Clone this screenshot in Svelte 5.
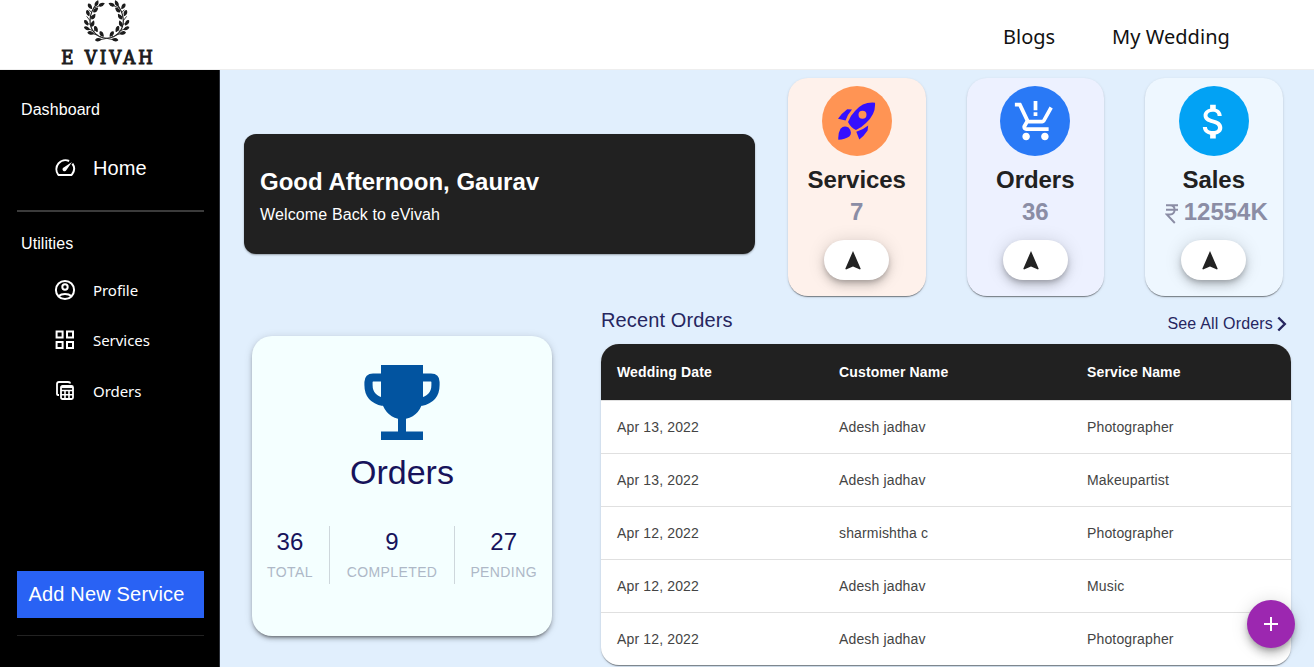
<script>
  const leaves = [
    [171, 9, -65], [186, 13, -25], [151, 18, 55], [168, 29, -45], [145, 38, 70],
    [161, 49, -55], [140, 67, 55], [159, 70, -70], [142, 84, 25], [169, 86, 65],
    [153, 98, 8], [186, 101, 55], [176, 118, -8]
  ];
  const stats = [
    { title: 'Services', value: '7', tone: 'peach', icon: 'rocket' },
    { title: 'Orders', value: '36', tone: 'lilac', icon: 'cart' },
    { title: 'Sales', value: '12554K', tone: 'sky', icon: 'dollar', rupee: true }
  ];
  const totals = [['36', 'TOTAL'], ['9', 'COMPLETED'], ['27', 'PENDING']];
  const orders = [
    ['Apr 13, 2022', 'Adesh jadhav', 'Photographer'],
    ['Apr 13, 2022', 'Adesh jadhav', 'Makeupartist'],
    ['Apr 12, 2022', 'sharmishtha c', 'Photographer'],
    ['Apr 12, 2022', 'Adesh jadhav', 'Music'],
    ['Apr 12, 2022', 'Adesh jadhav', 'Photographer']
  ];
</script>

{#snippet branch()}
  <path d="M201 114C169 112 151 88 151 61C151 39 161 22 174 7" fill="none" stroke="#222" stroke-width="3.5" />
  <path d="M151 61L141 48M152 72L139 68M152 50L164 45M156 37L148 28M164 23L182 15M159 91L143 84M163 94L168 78M173 104L154 99M182 110L189 98M201 114L178 119" fill="none" stroke="#222" stroke-width="2.5" />
  {#each leaves as [x, y, a]}
    <path d="M-8 0Q-3-7 8 0Q-2 7-8 0Z" fill="#1c1c1c" stroke="#1c1c1c" stroke-width="3.6" stroke-linejoin="round" transform="translate({x} {y}) rotate({a})" />
  {/each}
{/snippet}

<div class="page">
  <header>
    <div class="logo">
      <svg width="48" height="43" viewBox="130 -1 144 129">
        {@render branch()}
        <g transform="translate(402 0) scale(-1 1)">{@render branch()}</g>
      </svg>
      <div class="brand">E VIVAH</div>
    </div>
    <nav class="top-nav"><span class="blogs">Blogs</span><span class="wedding">My Wedding</span></nav>
  </header>

  <div class="body">
    <aside>
      <div class="label">Dashboard</div>
      <div class="item home">
        <svg width="24" height="24" viewBox="0 0 24 24" fill="none" stroke="#fff" stroke-width="2">
          <path d="M16.1 5A9 9 0 0 0 5 18.3Q5.6 19.1 6.6 19.1H17.4Q18.4 19.1 19 18.3A9 9 0 0 0 19.4 7.6" />
          <path d="M19 6L13.4 14A2 2 0 1 1 10.7 11.5Z" fill="#fff" stroke="none" />
        </svg>
        <span>Home</span>
      </div>
      <div class="rule"></div>
      <div class="label util">Utilities</div>
      <div class="menu">
        <div class="item">
          <svg width="24" height="24" viewBox="0 0 24 24" fill="none" stroke="#fff" stroke-width="2">
            <circle cx="12" cy="12" r="9.1" /><circle cx="12" cy="9" r="2.7" /><path d="M5.7 18Q8 15.9 12 15.9T18.3 18" />
          </svg><span>Profile</span>
        </div>
        <div class="item">
          <svg width="24" height="24" viewBox="0 0 24 24" fill="none" stroke="#fff" stroke-width="2">
            <path d="M3.6 3.6h6v6h-6zM14 3.6h6v6h-6zM3.6 14h6v6h-6zM14 14h6v6h-6z" />
          </svg><span>Services</span>
        </div>
        <div class="item">
          <svg width="24" height="24" viewBox="0 0 24 24" fill="none" stroke="#fff" stroke-width="1.8">
            <path d="M6 16H5Q4 16 4 15V5Q4 3 6 3H15Q17 3 17 4.5" /><rect x="8" y="7" width="12" height="13" rx="1.5" />
            <path d="M8 11.5H20M8 15.7H20M12 11.5V20M16 11.5V20" stroke-width="1.6" /><path d="M8 8.5H20" stroke-width="1.2" />
          </svg><span>Orders</span>
        </div>
      </div>
      <button class="add">Add New Service</button>
      <div class="rule faint"></div>
    </aside>

    <main>
      <section class="upper">
        <div class="banner"><h1>Good Afternoon, Gaurav</h1><p>Welcome Back to eVivah</p></div>
        <div class="stats">
          {#each stats as stat}
            <article class={stat.tone}>
              <div class="disc">
                {#if stat.icon === 'rocket'}
                  <svg width="38" height="38" viewBox="0 0 38 38" fill="#3410ff">
                    <path fill-rule="evenodd" d="M37 .7Q25-.5 17 9Q12 14 10 20Q13 26 18 28Q23 26 28 21Q38 12 37 .7ZM24.5 8.8A4 4 0 1 0 24.5 16.8A4 4 0 1 0 24.5 8.8Z" />
                    <path d="M14 7.6L9.2 7.2Q4 11 0 16.7L7.6 18.6Q9.6 12.5 14 7.6ZM18.3 29.8L21.3 37.5Q26 34 29.6 28.5L30.2 23.6Q25 28 18.3 29.8ZM2.5 26.7Q6 23 10.5 25.6Q15 30.5 11.3 34.5Q7 37.5 .3 37.7Q-.1 31 2.5 26.7Z" />
                  </svg>
                {:else if stat.icon === 'cart'}
                  <svg width="45" height="45" viewBox="0 0 24 24" fill="#fff">
                    <path d="M11 9h2V7h-2v2zm0-3h2V1h-2v5zm-4 12c-1.1 0-2 .9-2 2s.9 2 2 2 2-.9 2-2-.9-2-2-2zm10 0c-1.1 0-2 .9-2 2s.9 2 2 2 2-.9 2-2-.9-2-2-2zm-8.9-5h7.5c.7 0 1.4-.4 1.7-1l3.9-7-1.7-1-3.9 7h-7L4.3 2H1v2h2l3.6 7.6L5.2 14c-.7 1.3.3 3 1.8 3h12v-2H7l1.1-2z" />
                  </svg>
                {:else}
                  <svg width="45" height="45" viewBox="0 0 24 24" fill="#fff">
                    <path d="M11.8 10.9c-2.3-.6-3-1.2-3-2.2 0-1.1 1-1.9 2.8-1.9 1.9 0 2.6.9 2.6 2.2h2.2c-.1-1.7-1.1-3.3-3.2-3.8V3h-3v2.2c-1.9.4-3.5 1.7-3.5 3.6 0 2.3 1.9 3.5 4.7 4.1 2.5.6 3 1.5 3 2.4 0 .7-.5 1.8-2.8 1.8-2.1 0-3-.9-3.1-2.2H6.3c.1 2.4 1.9 3.7 3.9 4.1V21h3v-2.1c1.9-.4 3.5-1.5 3.5-3.6 0-2.8-2.4-3.8-4.9-4.4z" />
                  </svg>
                {/if}
              </div>
              <h2>{stat.title}</h2>
              <div class="value" class:money={stat.rupee}>
                {#if stat.rupee}
                  <svg width="14" height="20" viewBox="0 0 14 20" fill="none" stroke="#8b8da5" stroke-width="1.9"><path d="M1 1.3H13M1 5.8H13M3 1.3H5Q9.6 1.3 9.6 5.8T5 10.5H1.8L9.8 19" /></svg>
                {/if}
                <span>{stat.value}</span>
              </div>
              <button class="pill" aria-label={stat.title}>
                <svg width="16" height="19" viewBox="0 0 16 19"><path d="M8 0L15.7 17.8L15 18.5L8 15.4L1 18.5L.3 17.8Z" fill="#222" /></svg>
              </button>
            </article>
          {/each}
        </div>
      </section>

      <section class="lower">
        <article class="summary">
          <svg class="trophy" width="76" height="76" viewBox="0 0 76 76">
            <path d="M18 12.5H9Q4.5 12.5 4.5 17V20Q4.5 34 19.5 37M57 12.5H67Q71.5 12.5 71.5 17V20Q71.5 34 56.5 37" fill="none" stroke="#0254a0" stroke-width="8.2" />
            <path d="M17 0H59V34Q57 50 42 53.8V66.5H59V75H17V66.5H34V53.8Q20 50 17 34Z" fill="#0254a0" />
          </svg>
          <h3>Orders</h3>
          <div class="totals">
            {#each totals as [count, name]}<div><b>{count}</b><span>{name}</span></div>{/each}
          </div>
        </article>

        <div class="recent">
          <div class="caption">
            <h4>Recent Orders</h4>
            <div class="all"><span>See All Orders</span><svg width="10" height="16" viewBox="0 0 10 16" fill="none" stroke="#26265f" stroke-width="2.4"><path d="M1.3 1.5L7.8 8L1.3 14.5" /></svg></div>
          </div>
          <div class="table">
            <div class="row head"><span>Wedding Date</span><span>Customer Name</span><span>Service Name</span></div>
            {#each orders as order}
              <div class="row">{#each order as cell}<span>{cell}</span>{/each}</div>
            {/each}
          </div>
        </div>
      </section>
    </main>
  </div>
  <button class="fab" aria-label="Add"><svg width="24" height="24" viewBox="0 0 24 24" fill="#fff"><path d="M19 13h-6v6h-2v-6H5v-2h6V5h2v6h6v2z" /></svg></button>
</div>

<style>
  :global(body) { margin: 0; overflow: hidden; }
  * { box-sizing: border-box; }
  h1, h2, h3, h4, p { margin: 0; }
  button { border: 0; padding: 0; font: inherit; }
  svg { display: block; flex: none; }
  .page { height: 667px; font-family: "Liberation Sans", Arial, sans-serif; background: #e1effd; overflow: hidden; }
  header { height: 70px; background: #fff; border-bottom: 1px solid #eee; display: flex; justify-content: space-between; }
  .logo { width: 214px; display: flex; flex-direction: column; align-items: center; }
  .brand { font: normal 18.5px/20px "DejaVu Serif Condensed", "DejaVu Serif", serif; font-stretch: condensed; -webkit-text-stroke: 1px #1d1d1d; letter-spacing: 3px; margin-top: 5px; white-space: nowrap; color: #1d1d1d; padding-left: 3px; }
  .top-nav { display: flex; width: 311px; padding-top: 21px; font: 20px/32px "Noto Sans", sans-serif; color: #111; white-space: nowrap; }
  .blogs { width: 109px; }
  .wedding { letter-spacing: .05px; }
  .body { display: flex; height: 597px; }
  aside { width: 220px; flex: none; background: #000; border-right: 1px solid #2c3038; color: #fff; padding: 30px 15px 0 17px; }
  .label { font-size: 16px; line-height: 20px; padding-left: 4px; letter-spacing: .08px; }
  .item { display: flex; align-items: center; gap: 16px; height: 50.3px; padding-left: 36px; font: 15px/22px "Noto Sans", sans-serif; letter-spacing: -.05px; }
  .home { height: 48px; margin-top: 24px; font: 20px/24px "Liberation Sans", Arial, sans-serif; letter-spacing: .1px; }
  .rule { height: 2px; background: #3b3b3b; margin-top: 18px; }
  .util { margin-top: 22px; }
  .menu { height: 151px; margin-top: 11px; }
  .add { width: 187px; height: 47px; margin-top: 155px; padding-right: 8px; background: #2962f4; color: #fff; font-size: 20px; letter-spacing: .18px; white-space: nowrap; display: block; }
  .rule.faint { height: 1px; background: #222; margin-top: 17px; }
  main { flex: 1; padding: 8px 23px 0 24px; }
  .upper { display: flex; height: 218px; justify-content: space-between; padding-right: 8.5px; }
  .banner { width: 511px; height: 120px; margin-top: 56px; padding: 32px 16px; background: #212121; color: #fff; border-radius: 12px; box-shadow: 0 1px 2px #0005; }
  .banner h1 { font-size: 24px; line-height: 32px; }
  .banner p { font-size: 16px; line-height: 33px; letter-spacing: .13px; }
  .stats { display: flex; gap: 41px; }
  article { box-shadow: 0 2px 1px -1px #0005, 0 1px 1px #0002, 0 1px 3px #0002; }
  .stats article { width: 137.5px; height: 218px; border-radius: 20px; padding-top: 8px; display: flex; flex-direction: column; align-items: center; }
  .peach { background: #fef1eb; } .lilac { background: #edf1ff; } .sky { background: #eef7ff; }
  .disc { width: 70px; height: 70px; border-radius: 50%; display: grid; place-items: center; }
  .peach .disc { background: #ff9454; } .lilac .disc { background: #2979f6; } .sky .disc { background: #02a2f4; }
  h2 { font-size: 24px; line-height: 32px; margin-top: 8px; color: #212121; letter-spacing: -.05px; }
  .value { display: flex; align-items: center; gap: 5px; height: 32px; font-size: 24px; font-weight: bold; color: #8b8da5; }
  .money { padding-left: 5px; }
  .value svg { margin-top: 4px; }
  .pill { width: 65px; height: 40px; margin-top: 12px; border-radius: 20px; background: #fff; display: flex; align-items: center; padding-left: 20.5px; box-shadow: 0 3px 5px -1px #0003, 0 6px 10px #0002, 0 1px 18px #0002; }
  .lower { display: flex; justify-content: space-between; }
  .summary { width: 300px; height: 300px; margin: 40px 0 0 8px; border-radius: 20px; background: #f4ffff; display: flex; flex-direction: column; align-items: center; color: #17135b; box-shadow: 0 3px 3px -2px #0006, 0 3px 4px #0003, 0 1px 8px #0002; }
  .trophy { margin-top: 29px; }
  h3 { font-size: 34px; font-weight: normal; line-height: 40px; margin-top: 11px; }
  .totals { display: flex; margin-top: 34px; }
  .totals div { height: 58px; padding: 0 16.4px; display: flex; flex-direction: column; align-items: center; border-left: 1px solid #ced7dc; }
  .totals div:first-child { border: 0; }
  .totals div:last-child { padding-left: 15.6px; }
  .totals b { font-size: 24px; line-height: 32px; font-weight: normal; }
  .totals span { font-size: 14px; line-height: 20px; margin-top: 4px; letter-spacing: .4px; color: #aeb8c7; }
  .recent { width: 690px; }
  .caption { height: 48px; display: flex; justify-content: space-between; color: #26265f; white-space: nowrap; }
  h4 { font-size: 20px; line-height: 24px; font-weight: normal; margin-top: 12px; letter-spacing: .13px; }
  .all { display: flex; align-items: center; height: 24px; margin: 16px 4px 0 0; gap: 4px; font-size: 16px; letter-spacing: .17px; }
  .table { border-radius: 18px; overflow: hidden; background: #fff; box-shadow: 0 2px 1px -1px #0005, 0 1px 1px #0002, 0 1px 3px #0002; }
  .row { height: 53px; display: grid; grid-template-columns: 222px 248px 1fr; align-items: center; padding: 0 16px; font-size: 14px; letter-spacing: .15px; color: #444; border-bottom: 1px solid #e0e0e0; }
  .row:last-child { height: 52px; border-bottom: 0; }
  .row.head { height: 57px; background: #212121; color: #fff; font-weight: bold; }
  .fab { position: fixed; left: 1247px; top: 600px; width: 48px; height: 48px; border-radius: 50%; background: #9c27b0; display: grid; place-items: center; box-shadow: 0 3px 5px -1px #0003, 0 6px 10px #0003, 0 1px 18px #0002; }
</style>
